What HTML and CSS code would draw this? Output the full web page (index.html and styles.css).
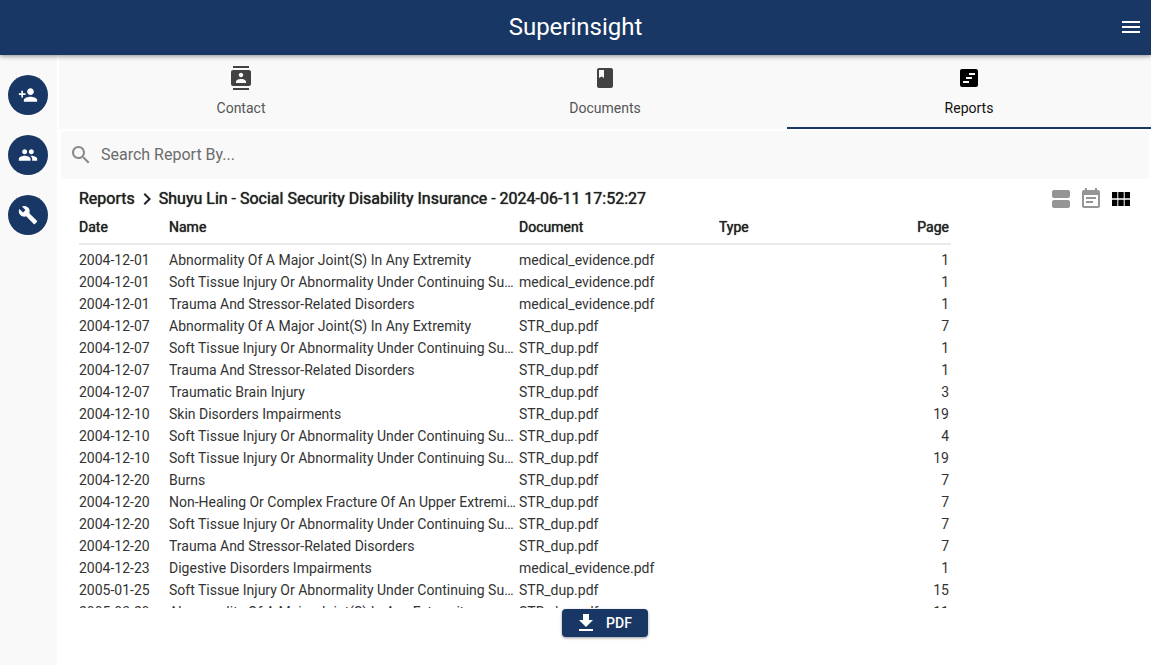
FILE: index.html
```html
<!DOCTYPE html>
<html lang="en">
<head>
<meta charset="utf-8">
<meta name="viewport" content="width=device-width, initial-scale=1">
<title>Superinsight</title>
<link rel="stylesheet" href="styles.css">
</head>
<body>
<div class="app">
  <header class="topbar">
    <h1 class="brand">Superinsight</h1>
    <button class="icon-button menu-button" type="button" aria-label="Menu">
      <svg class="icon" viewBox="0 0 24 24"><path d="M3 18h18v-2H3v2zm0-5h18v-2H3v2zm0-7v2h18V6H3z"/></svg>
    </button>
  </header>
  <div class="body">
    <nav class="rail" aria-label="Main">
      <button class="rail-button" type="button" aria-label="Add contact">
        <svg class="icon-small" viewBox="0 0 24 24"><path d="M15 12c2.21 0 4-1.79 4-4s-1.79-4-4-4-4 1.790-4 4 1.790 4 4 4zm-9-2V7H4v3H1v2h3v3h2v-3h3v-2H6zm9 4c-2.670 0-8 1.340-8 4v2h16v-2c0-2.660-5.330-4-8-4z"/></svg>
      </button>
      <button class="rail-button" type="button" aria-label="Contacts">
        <svg class="icon-small" viewBox="0 0 24 24"><path d="M16 11c1.660 0 2.990-1.340 2.990-3S17.660 5 16 5s-3 1.340-3 3 1.340 3 3 3zm-8 0c1.660 0 2.990-1.340 2.990-3S9.660 5 8 5 5 6.340 5 8s1.340 3 3 3zm0 2c-2.330 0-7 1.170-7 3.500V19h14v-2.500C15 14.170 10.330 13 8 13zm8 0c-.29 0-.62.02-.97.05 1.160.84 1.970 1.970 1.970 3.450V19h6v-2.500c0-2.330-4.670-3.500-7-3.500z"/></svg>
      </button>
      <button class="rail-button" type="button" aria-label="Tools">
        <svg class="icon-small" viewBox="0 0 24 24"><path d="M22.700 19l-9.100-9.100c.9-2.300.4-5-1.500-6.900-2-2-5-2.400-7.400-1.300L9 6 6 9 1.600 4.700C.4 7.100.9 10.100 2.900 12.100c1.900 1.900 4.600 2.400 6.900 1.500l9.100 9.100c.4.4 1 .4 1.400 0l2.300-2.300c.5-.4.5-1.100.1-1.400z"/></svg>
      </button>
    </nav>
    <main class="content">
      <div class="tabs" role="tablist">
        <button class="tab" type="button" role="tab" aria-selected="false">
          <svg class="icon tab-icon" viewBox="0 0 24 24"><path d="M20 0H4v2h16V0zM4 24h16v-2H4v2zM20 4H4c-1.100 0-2 .9-2 2v12c0 1.100.9 2 2 2h16c1.100 0 2-.9 2-2V6c0-1.100-.9-2-2-2zm-8 2.750c1.240 0 2.250 1.010 2.250 2.250s-1.010 2.250-2.250 2.250S9.750 10.240 9.750 9 10.760 6.750 12 6.750zM17 17H7v-1.500c0-1.670 3.330-2.500 5-2.500s5 .83 5 2.500V17z"/></svg>
          Contact
        </button>
        <button class="tab" type="button" role="tab" aria-selected="false">
          <svg class="icon tab-icon" viewBox="0 0 24 24"><path d="M18 2H6c-1.100 0-2 .9-2 2v16c0 1.100.9 2 2 2h12c1.100 0 2-.9 2-2V4c0-1.100-.9-2-2-2zM6 4h5v8l-2.500-1.500L6 12V4z"/></svg>
          Documents
        </button>
        <button class="tab tab-active" type="button" role="tab" aria-selected="true">
          <svg class="icon" viewBox="0 0 24 24"><path fill-rule="evenodd" d="M19 3H5c-1.100 0-2 .9-2 2v14c0 1.100.9 2 2 2h14c1.100 0 2-.9 2-2V5c0-1.100-.9-2-2-2zM12 17H6v-2h6v2zm3-4H9v-2h6v2zm3-4h-6V7h6v2z"/></svg>
          Reports
        </button>
      </div>
      <label class="search">
        <svg class="icon search-icon" viewBox="0 0 24 24"><path d="M15.500 14h-.79l-.28-.27C15.410 12.590 16 11.110 16 9.500 16 5.910 13.090 3 9.500 3S3 5.910 3 9.500 5.910 16 9.500 16c1.610 0 3.090-.59 4.230-1.570l.27.28v.79l5 4.990L20.490 19l-4.990-5zm-6 0C7.010 14 5 11.990 5 9.500S7.010 5 9.500 5 14 7.010 14 9.500 11.990 14 9.500 14z"/></svg>
        <input class="search-input" type="text" placeholder="Search Report By..." aria-label="Search Report By">
      </label>
      <section class="report">
        <div class="report-head">
          <div class="crumbs">
            <a class="crumb" href="#">Reports</a>
            <svg class="icon" viewBox="0 0 24 24"><path d="M10 6L8.590 7.410 13.170 12l-4.580 4.590L10 18l6-6z"/></svg>
            <h2 class="crumb">Shuyu Lin - Social Security Disability Insurance - 2024-06-11 17:52:27</h2>
          </div>
          <div class="views">
            <button class="icon-button view" type="button" aria-label="List view">
              <svg class="icon" viewBox="0 0 24 24"><path d="M19 13H5c-1.100 0-2 .9-2 2v4c0 1.100.9 2 2 2h14c1.100 0 2-.9 2-2v-4c0-1.100-.9-2-2-2zm0-10H5c-1.100 0-2 .9-2 2v4c0 1.100.9 2 2 2h14c1.100 0 2-.9 2-2V5c0-1.100-.9-2-2-2z"/></svg>
            </button>
            <button class="icon-button view" type="button" aria-label="Timeline view">
              <svg class="icon" viewBox="0 0 24 24"><path d="M17 10H7v2h10v-2zm2-7h-1V1h-2v2H8V1H6v2H5c-1.110 0-1.990.9-1.990 2L3 19c0 1.100.89 2 2 2h14c1.100 0 2-.9 2-2V5c0-1.100-.9-2-2-2zm0 16H5V8h14v11zm-5-5H7v2h7v-2z"/></svg>
            </button>
            <button class="icon-button view view-active" type="button" aria-label="Table view">
              <svg class="icon" viewBox="0 0 24 24"><path d="M3 5h5.300v6.300H3zM9.300 5h5.400v6.300H9.300zM15.700 5H21v6.300h-5.300zM3 12.700h5.300V19H3zM9.300 12.700h5.400V19H9.300zM15.700 12.700H21V19h-5.300z"/></svg>
            </button>
          </div>
        </div>
        <div class="table-scroll">
          <table class="records">
            <colgroup><col class="col-date"><col class="col-name"><col class="col-document"><col class="col-type"><col class="col-page"></colgroup>
            <thead>
              <tr><th>Date</th><th>Name</th><th>Document</th><th>Type</th><th class="page">Page</th></tr>
            </thead>
            <tbody>
              <tr><td>2004-12-01</td><td>Abnormality Of A Major Joint(S) In Any Extremity</td><td>medical_evidence.pdf</td><td></td><td class="page">1</td></tr>
              <tr><td>2004-12-01</td><td>Soft Tissue Injury Or Abnormality Under Continuing Surgical Management</td><td>medical_evidence.pdf</td><td></td><td class="page">1</td></tr>
              <tr><td>2004-12-01</td><td>Trauma And Stressor-Related Disorders</td><td>medical_evidence.pdf</td><td></td><td class="page">1</td></tr>
              <tr><td>2004-12-07</td><td>Abnormality Of A Major Joint(S) In Any Extremity</td><td>STR_dup.pdf</td><td></td><td class="page">7</td></tr>
              <tr><td>2004-12-07</td><td>Soft Tissue Injury Or Abnormality Under Continuing Surgical Management</td><td>STR_dup.pdf</td><td></td><td class="page">1</td></tr>
              <tr><td>2004-12-07</td><td>Trauma And Stressor-Related Disorders</td><td>STR_dup.pdf</td><td></td><td class="page">1</td></tr>
              <tr><td>2004-12-07</td><td>Traumatic Brain Injury</td><td>STR_dup.pdf</td><td></td><td class="page">3</td></tr>
              <tr><td>2004-12-10</td><td>Skin Disorders Impairments</td><td>STR_dup.pdf</td><td></td><td class="page">19</td></tr>
              <tr><td>2004-12-10</td><td>Soft Tissue Injury Or Abnormality Under Continuing Surgical Management</td><td>STR_dup.pdf</td><td></td><td class="page">4</td></tr>
              <tr><td>2004-12-10</td><td>Soft Tissue Injury Or Abnormality Under Continuing Surgical Management</td><td>STR_dup.pdf</td><td></td><td class="page">19</td></tr>
              <tr><td>2004-12-20</td><td>Burns</td><td>STR_dup.pdf</td><td></td><td class="page">7</td></tr>
              <tr><td>2004-12-20</td><td>Non-Healing Or Complex Fracture Of An Upper Extremity</td><td>STR_dup.pdf</td><td></td><td class="page">7</td></tr>
              <tr><td>2004-12-20</td><td>Soft Tissue Injury Or Abnormality Under Continuing Surgical Management</td><td>STR_dup.pdf</td><td></td><td class="page">7</td></tr>
              <tr><td>2004-12-20</td><td>Trauma And Stressor-Related Disorders</td><td>STR_dup.pdf</td><td></td><td class="page">7</td></tr>
              <tr><td>2004-12-23</td><td>Digestive Disorders Impairments</td><td>medical_evidence.pdf</td><td></td><td class="page">1</td></tr>
              <tr><td>2005-01-25</td><td>Soft Tissue Injury Or Abnormality Under Continuing Surgical Management</td><td>STR_dup.pdf</td><td></td><td class="page">15</td></tr>
              <tr><td>2005-03-29</td><td>Abnormality Of A Major Joint(S) In Any Extremity</td><td>STR_dup.pdf</td><td></td><td class="page">11</td></tr>
            </tbody>
          </table>
        </div>
        <button class="pdf-button" type="button">
          <svg class="icon" viewBox="0 0 24 24"><path d="M19 9h-4V3H9v6H5l7 7 7-7zM5 18v2h14v-2H5z"/></svg>
          PDF
        </button>
      </section>
    </main>
  </div>
</div>
</body>
</html>
```
FILE: styles.css
```css
* {
  box-sizing: border-box;
}

body {
  margin: 0;
  background: #fff;
  color: #333;
  font-family: Roboto, "Liberation Sans", sans-serif;
  font-size: 14px;
}

button {
  padding: 0;
  border: 0;
  background: none;
  font: inherit;
  cursor: pointer;
}

svg {
  display: block;
  flex: none;
  fill: currentColor;
}

.app {
  display: flex;
  flex-direction: column;
  height: 100vh;
  overflow: hidden;
}

.icon {
  width: 24px;
  height: 24px;
}

.icon-small {
  width: 20px;
  height: 20px;
}

.topbar {
  display: grid;
  grid-template-columns: 1fr auto 1fr;
  align-items: center;
  flex: none;
  height: 55px;
  padding: 0 8px 2px;
  background: #193764;
  color: #fff;
  box-shadow: 0 1px 5px rgba(0, 0, 0, 0.45);
  z-index: 1;
}

.brand {
  grid-column: 2;
  margin: 0;
  font-size: 24px;
  font-weight: 400;
}

.menu-button {
  justify-self: end;
  color: #fff;
}

.body {
  display: flex;
  flex: 1;
  gap: 2px;
  min-height: 0;
}

.rail {
  display: flex;
  flex: none;
  flex-direction: column;
  gap: 20px;
  width: 57px;
  padding: 20px 8px;
  background: #f9f9f9;
}

.rail-button {
  display: grid;
  place-items: center;
  width: 40px;
  height: 40px;
  border-radius: 50%;
  background: #193764;
  color: #fff;
}

.content {
  display: flex;
  flex: 1;
  flex-direction: column;
  min-width: 0;
}

.tabs {
  display: grid;
  grid-template-columns: repeat(3, 1fr);
  flex: none;
  height: 74px;
  background: #f9f9f9;
}

.tab {
  display: flex;
  flex-direction: column;
  align-items: center;
  gap: 10px;
  padding-top: 11px;
  border-bottom: 2px solid transparent;
  color: #555;
  line-height: 16px;
}

.tab-icon {
  color: #424242;
}

.tab-active {
  border-color: #193764;
  color: #111;
}

.tab-active .icon {
  color: #000;
}

.search {
  display: flex;
  align-items: center;
  flex: none;
  gap: 8px;
  height: 48px;
  margin: 2px 2px 0;
  padding: 0 8px;
  border-radius: 4px;
  background: #f9f9f9;
}

.search-icon {
  color: #8a8a8a;
}

.search-input {
  flex: 1;
  min-width: 0;
  padding: 0 0 2px;
  border: 0;
  outline: 0;
  background: none;
  color: #212121;
  font: inherit;
  font-size: 16px;
}

.search-input::placeholder {
  color: #6b6b6b;
  opacity: 1;
}

.report {
  display: flex;
  flex: 1;
  flex-direction: column;
  min-height: 0;
  padding: 8px 18px 28px;
}

.report-head {
  display: flex;
  align-items: center;
  justify-content: space-between;
  flex: none;
  margin-left: 2px;
}

.crumbs {
  display: flex;
  align-items: center;
  color: #212121;
}

.crumb {
  margin: 0;
  padding-bottom: 2px;
  color: #212121;
  font-size: 16px;
  font-weight: 400;
  text-decoration: none;
  text-shadow: 0 0 1px #212121;
}

.views {
  display: flex;
  gap: 6px;
}

.view {
  color: #959595;
}

.view-active {
  color: #000;
}

.table-scroll {
  flex: 1;
  min-height: 0;
  margin: 5px 0 1px 2px;
  overflow: hidden;
}

.records {
  width: 872px;
  border-spacing: 0;
  table-layout: fixed;
}

.col-date {
  width: 90px;
}

.col-name {
  width: 350px;
}

.col-document {
  width: 200px;
}

.col-type {
  width: 150px;
}

.records th,
.records td {
  height: 22px;
  padding: 0 2px 0 0;
  overflow: hidden;
  line-height: 22px;
  text-align: left;
  text-overflow: ellipsis;
  white-space: nowrap;
}

.records th {
  height: 29px;
  padding-bottom: 5px;
  border-bottom: 2px solid #ebebeb;
  color: #212121;
  font-weight: 400;
  text-shadow: 0 0 1px #212121;
}

.records tbody::before {
  display: block;
  height: 4px;
  content: "";
}

.records .page {
  text-align: right;
}

.pdf-button {
  display: flex;
  align-items: center;
  align-self: center;
  flex: none;
  gap: 8px;
  height: 28px;
  padding: 0 16px 0 12px;
  border-radius: 4px;
  background: #193764;
  color: #fff;
  font-weight: 500;
  box-shadow: 0 1px 3px rgba(0, 0, 0, 0.4);
}
```
